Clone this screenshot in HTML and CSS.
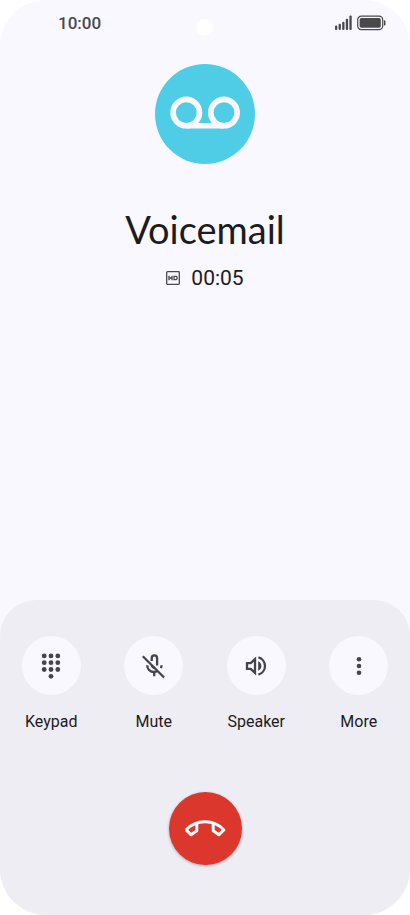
FILE: index.html
```html
<!DOCTYPE html>
<html lang="en">
<head>
<meta charset="utf-8">
<meta name="viewport" content="width=device-width, initial-scale=1">
<title>Voicemail call</title>
<link rel="stylesheet" href="styles.css">
</head>
<body>
<div class="phone">
  <header class="status">
    <time class="clock">10:00</time>
    <span class="camera"></span>
    <div class="indicators">
      <svg class="signal" viewBox="0 0 18 16" aria-hidden="true">
        <rect x="0" y="10.5" width="2.3" height="4.5" rx="1"/>
        <rect x="3.6" y="8.7" width="2.3" height="6.3" rx="1"/>
        <rect x="7.2" y="6.7" width="2.3" height="8.3" rx="1"/>
        <rect x="10.8" y="3.7" width="2.3" height="11.3" rx="1"/>
        <rect x="14.4" y="0.5" width="2.3" height="14.5" rx="1"/>
      </svg>
      <svg class="battery" viewBox="0 0 29 16" aria-hidden="true">
        <rect class="battery-frame" x="0.7" y="1.2" width="25" height="13.4" rx="3.6"/>
        <rect x="2.6" y="3.1" width="21.2" height="9.6" rx="1.8"/>
        <path d="M26.9 5.2h.4q1.2.3 1.2 1.4v2.6q0 1.1-1.2 1.4h-.4z"/>
      </svg>
    </div>
  </header>

  <main class="caller">
    <div class="avatar">
      <svg viewBox="0 0 100 100" aria-hidden="true">
        <circle cx="31.3" cy="48.6" r="13.2"/>
        <circle cx="69" cy="48.6" r="13.2"/>
        <path d="M31.3 61.8H69"/>
      </svg>
    </div>
    <h1 class="name">Voicemail</h1>
    <p class="duration">
      <svg class="hd" viewBox="0 0 14 14" aria-hidden="true">
        <rect x="0.7" y="0.7" width="12.6" height="12.6" rx="0.8"/>
        <path d="M3 4.8v4.4M6 4.8v4.4M3 7h3M8 5.3h2.2l.8.7v2l-.8.7H8z"/>
      </svg>
      <time>00:05</time>
    </p>
  </main>

  <section class="panel" aria-label="Call controls">
    <div class="actions">
      <button class="action" type="button">
        <span class="disc">
          <svg class="fill" viewBox="0 0 28 28" aria-hidden="true">
            <circle cx="7.2" cy="3.9" r="2.4"/><circle cx="14" cy="3.9" r="2.4"/><circle cx="20.8" cy="3.9" r="2.4"/>
            <circle cx="7.2" cy="10.7" r="2.4"/><circle cx="14" cy="10.7" r="2.4"/><circle cx="20.8" cy="10.7" r="2.4"/>
            <circle cx="7.2" cy="17.5" r="2.4"/><circle cx="14" cy="17.5" r="2.4"/><circle cx="20.8" cy="17.5" r="2.4"/>
            <circle cx="14" cy="24.3" r="2.4"/>
          </svg>
        </span>
        <span class="label">Keypad</span>
      </button>
      <button class="action" type="button">
        <span class="disc">
          <svg class="line" viewBox="0 0 28 28" aria-hidden="true">
            <path d="M2.8 4.2L24.1 25.5"/>
            <path d="M11.7 8.9V6a2.7 2.7 0 0 1 5.4 0v7.600"/>
            <path d="M7.2 13.2c0 4 3 6.8 6.9 6.8 1.3 0 2.5-.3 3.5-.9M14.2 20v4.2M21.5 13.2c0 1-.2 2-.6 2.9"/>
            <path d="M12 13.5c.2 1.3 1 2.1 2.4 2.3"/>
          </svg>
        </span>
        <span class="label">Mute</span>
      </button>
      <button class="action" type="button">
        <span class="disc">
          <svg class="line" viewBox="0 0 28 28" aria-hidden="true">
            <path d="M5 11.2h3.7l4.3-4.1v13.8l-4.3-4.1H5z"/>
            <path d="M16.4 5.4a8.9 8.9 0 0 1 0 17.2"/>
            <path class="solid" d="M16.2 9.3c2 .9 3.2 2.6 3.2 4.7s-1.2 3.8-3.2 4.7z"/>
          </svg>
        </span>
        <span class="label">Speaker</span>
      </button>
      <button class="action" type="button">
        <span class="disc">
          <svg class="fill" viewBox="0 0 28 28" aria-hidden="true">
            <circle cx="14" cy="7.2" r="2.3"/><circle cx="14" cy="14" r="2.3"/><circle cx="14" cy="20.8" r="2.3"/>
          </svg>
        </span>
        <span class="label">More</span>
      </button>
    </div>
    <button class="hangup" type="button" aria-label="End call">
      <svg viewBox="0 0 42 18" aria-hidden="true">
        <path d="M2.1 9.9C12-.9 30-.9 39.900 9.900L35 14.700L29.200 10.700V4.200M2.100 9.900L7 14.700L12.800 10.700V4.200"/>
      </svg>
    </button>
  </section>
</div>
</body>
</html>
```

FILE: styles.css
```css
* {
  box-sizing: border-box;
}

body {
  margin: 0;
  background: #fff;
  color: #1c1b20;
  font-family: Roboto, "Liberation Sans", sans-serif;
}

button {
  border: 0;
  padding: 0;
  font: inherit;
  color: inherit;
  background: none;
  cursor: pointer;
}

svg {
  display: block;
}

.phone {
  display: flex;
  flex-direction: column;
  min-height: 100vh;
  background: #f9f8ff;
  border-radius: 46px;
  overflow: hidden;
}

.status {
  display: grid;
  grid-template-columns: 1fr auto 1fr;
  align-items: center;
  height: 46px;
  padding: 0 24px 0 58px;
  position: relative;
}

.clock {
  font-size: 17px;
  font-weight: 500;
  color: #49484d;
}

.camera {
  position: absolute;
  top: 19px;
  left: 50%;
  width: 17px;
  height: 17px;
  margin-left: -9px;
  border-radius: 50%;
  background: #fff;
}

.indicators {
  display: flex;
  grid-column: 3;
  justify-content: flex-end;
  gap: 4px;
  fill: #49484b;
}

.signal {
  width: 18px;
  height: 16px;
}

.battery {
  width: 29px;
  height: 16px;
}

.battery-frame {
  fill: none;
  stroke: #49484b;
  stroke-width: 1.2;
}

.caller {
  flex: 1;
  display: flex;
  flex-direction: column;
  align-items: center;
  padding-top: 18px;
}

.avatar {
  width: 100px;
  height: 100px;
  border-radius: 50%;
  background: #50cde6;
}

.avatar svg {
  fill: none;
  stroke: #f9f8ff;
  stroke-width: 5.6;
}

.name {
  margin: 40px 0 0;
  font-family: Lato, sans-serif;
  font-size: 38px;
  line-height: 50px;
  font-weight: 400;
}

.duration {
  display: flex;
  align-items: center;
  gap: 11px;
  margin: 10px 0 0;
  font-size: 21px;
  line-height: 28px;
}

.hd {
  width: 14px;
  height: 14px;
  fill: none;
  stroke: #49474f;
  stroke-width: 1.3;
}

.panel {
  display: flex;
  flex-direction: column;
  align-items: center;
  padding: 36px 0 50px;
  background: #eeedf4;
  border-radius: 36px 36px 0 0;
}

.actions {
  display: grid;
  grid-template-columns: repeat(4, 1fr);
  width: 100%;
}

.action {
  display: flex;
  flex-direction: column;
  align-items: center;
  gap: 17px;
}

.disc {
  display: grid;
  place-items: center;
  width: 59px;
  height: 59px;
  border-radius: 50%;
  background: #f9f8ff;
}

.disc svg {
  width: 28px;
  height: 28px;
}

.fill {
  fill: #45434b;
}

.line {
  fill: none;
  stroke: #45434b;
  stroke-width: 2.3;
}

.solid {
  fill: #45434b;
  stroke: none;
}

.label {
  font-size: 16px;
  line-height: 20px;
}

.hangup {
  display: grid;
  place-items: center;
  width: 73px;
  height: 73px;
  margin-top: 60px;
  border-radius: 50%;
  background: #db372d;
  box-shadow: 0 1px 3px rgba(0, 0, 0, 0.3);
}

.hangup svg {
  width: 42px;
  height: 18px;
  fill: none;
  stroke: #fff;
  stroke-width: 3;
  stroke-linejoin: round;
}
```
